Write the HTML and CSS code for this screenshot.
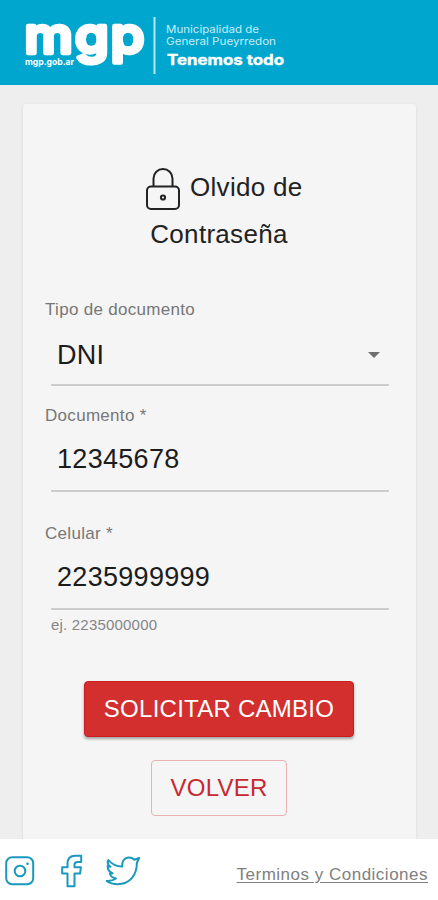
FILE: index.html
```html
<!DOCTYPE html>
<html lang="es">
<head>
    <meta charset="UTF-8">
    <meta name="viewport" content="width=device-width, initial-scale=1.0">
    <title>Olvido de Contraseña</title>
    <link rel="stylesheet" href="styles.css">
</head>
<body>
    <header class="header">
        <svg class="logo" width="300" height="85" viewBox="0 0 300 85">
            <text class="logo-name" x="24.5" y="52.5" textLength="122" lengthAdjust="spacingAndGlyphs">mgp</text>
            <text class="logo-url" x="25" y="65" textLength="49" lengthAdjust="spacingAndGlyphs">mgp.gob.ar</text>
            <rect class="logo-line" x="153.5" y="17" width="2" height="57"/>
            <text class="logo-city" x="166" y="33" textLength="93" lengthAdjust="spacingAndGlyphs">Municipalidad de</text>
            <text class="logo-city" x="166" y="44.5" textLength="110" lengthAdjust="spacingAndGlyphs">General Pueyrredon</text>
            <text class="logo-slogan" x="167" y="65" textLength="117" lengthAdjust="spacingAndGlyphs">Tenemos todo</text>
        </svg>
    </header>
    <main class="main">
        <form class="card">
            <h1 class="title">
                <span class="title-top">
                    <svg class="lock" width="36" height="44" viewBox="0 0 36 44">
                        <rect x="2" y="19.5" width="32" height="22.5" rx="4"/>
                        <path d="M8.5 19.5V11.5a9.500 9.500 0 0 1 19 0v8"/>
                        <circle cx="18" cy="30.5" r="2.1"/>
                    </svg>
                    Olvido de
                </span>
                <br>Contraseña
            </h1>

            <div class="field">
                <label class="label">Tipo de documento</label>
                <div class="value select">DNI <span class="arrow"></span></div>
            </div>
            <div class="field field-doc">
                <label class="label" for="documento">Documento *</label>
                <input class="value" type="text" id="documento" value="12345678">
            </div>
            <div class="field">
                <label class="label" for="celular">Celular *</label>
                <input class="value" type="text" id="celular" value="2235999999">
                <p class="hint">ej. 2235000000</p>
            </div>

            <div class="buttons">
                <button class="btn btn-primary" type="button">SOLICITAR CAMBIO</button>
                <button class="btn btn-outline" type="button">VOLVER</button>
            </div>
        </form>
    </main>
    <footer class="footer">
        <div class="social">
            <svg width="30" height="30" viewBox="0 0 30 30">
                <rect x="1.2" y="1.2" width="27" height="27" rx="6"/>
                <circle cx="15" cy="15" r="5.3"/>
                <circle class="dot" cx="22.5" cy="7.8" r="1.3"/>
            </svg>
            <svg width="22" height="34" viewBox="0 0 22 34">
                <path d="M6.5 32.3V19.5H1.2v-6.3h5.3V9.5c0-5 3-7.8 7.8-7.8h5.9v6.2h-3.5c-2.2 0-3.2.8-3.2 2.6v2.7h6.4l-.8 6.3h-5.6v12.8z"/>
            </svg>
            <svg width="36" height="30" viewBox="0 0 36 30">
                <path d="M3.4 4C6.500 7.900 11.500 10.400 17.300 10.600C16.400 5.700 19.400 1.600 24 1.600C26.200 1.600 28 2.500 29.300 3.800L34.200 2L31.900 6.800C32 18.500 25.300 28.200 12.500 28.200C8.300 28.200 4.500 27 1.600 25C5.500 25.200 8.600 24.300 11 22.500C8 22 5.700 20.300 4.800 17.500L7.700 17.300C4.300 15.800 2.500 13.200 2.600 10L5.400 10.800C2.700 8.600 2.100 6.300 3.400 4z"/>
            </svg>
        </div>
        <a class="terms" href="#">Terminos y Condiciones</a>
    </footer>
</body>
</html>
```
FILE: styles.css
```css
* {
    box-sizing: border-box;
}
body {
    margin: 0;
    height: 900px;
    display: flex;
    flex-direction: column;
    overflow: hidden;
    font-family: "Liberation Sans", Arial, sans-serif;
    background: #eeeeee;
}
.header {
    height: 85px;
    flex-shrink: 0;
    background: #00a6ce;
}
.logo {
    display: block;
    fill: #ffffff;
}
.logo-name {
    font: 500 49px "Inter", sans-serif;
    letter-spacing: 2px;
    stroke: #ffffff;
    stroke-width: 4.5px;
    stroke-linejoin: round;
}
.logo-url {
    font: 700 9px "Inter", sans-serif;
}
.logo-line {
    fill: #b5e5f1;
}
.logo-city {
    font: 400 10.5px "Inter", sans-serif;
    fill: #c5edf6;
}
.logo-slogan {
    font: 700 14.5px "Inter", sans-serif;
    stroke: #ffffff;
    stroke-width: 0.4px;
}
.main {
    flex: 1;
    min-height: 0;
    padding: 19px 22px 0 23px;
    overflow: hidden;
}
.card {
    height: 760px;
    padding: 60px 28px 0 22px;
    background: #f5f5f5;
    border-radius: 3px;
    box-shadow: 0 1px 3px rgba(0, 0, 0, 0.1);
}
.title {
    height: 134px;
    margin: 0;
    padding-left: 5px;
    font-size: 26px;
    font-weight: 400;
    line-height: 46px;
    letter-spacing: 0.3px;
    text-align: center;
    color: #222222;
}
.title-top {
    padding-left: 10px;
}
.lock {
    height: 44px;
    margin-right: 1px;
    vertical-align: middle;
    fill: none;
    stroke: #222222;
    stroke-width: 2;
}
.field {
    height: 106px;
}
.field-doc {
    height: 118px;
}
.label {
    display: block;
    height: 24px;
    font-size: 17px;
    line-height: 23px;
    letter-spacing: 0.3px;
    color: #777777;
}
.value {
    display: block;
    width: 338px;
    height: 64px;
    margin-left: 6px;
    padding: 0 7px 0 6px;
    border: 0;
    border-bottom: 2px solid #cccccc;
    background: none;
    font: 27px/62px "Liberation Sans", Arial, sans-serif;
    letter-spacing: 0.3px;
    color: #1c1c1c;
    outline: none;
}
.select {
    display: flex;
    justify-content: space-between;
    align-items: center;
    padding-top: 4px;
}
.arrow {
    border: 6px solid transparent;
    border-top-color: #707070;
    border-bottom: 0;
    margin-right: 2px;
}
.hint {
    margin: 5px 0 0 6px;
    font-size: 15px;
    line-height: 20px;
    letter-spacing: 0.2px;
    color: #858585;
}
.buttons {
    display: flex;
    flex-direction: column;
    align-items: center;
    gap: 23px;
    padding: 53px 0 0 5px;
}
.btn {
    height: 56px;
    padding: 0 0 1px;
    border-radius: 4px;
    font: 24px "Liberation Sans", Arial, sans-serif;
    letter-spacing: 0.25px;
}
.btn-primary {
    width: 270px;
    border: 1px solid #cb1d20;
    background: #d32f2f;
    color: #ffffff;
    box-shadow: 0 2px 3px rgba(0, 0, 0, 0.35);
}
.btn-outline {
    width: 136px;
    border: 1px solid #eab0b3;
    background: transparent;
    color: #c62930;
}
.footer {
    height: 61px;
    flex-shrink: 0;
    display: flex;
    justify-content: space-between;
    align-items: center;
    padding: 3px 10px 0 5px;
    background: #ffffff;
}
.social {
    display: flex;
    align-items: center;
    gap: 26px;
}
.social svg {
    fill: none;
    stroke: #1a98bf;
    stroke-width: 2;
    stroke-linejoin: round;
}
.social svg:last-child {
    margin-left: -4px;
}
.social .dot {
    fill: #1a98bf;
    stroke: none;
}
.terms {
    margin-top: 7px;
    font-size: 17px;
    letter-spacing: 0.5px;
    color: #808080;
    text-underline-offset: 2px;
}
```
